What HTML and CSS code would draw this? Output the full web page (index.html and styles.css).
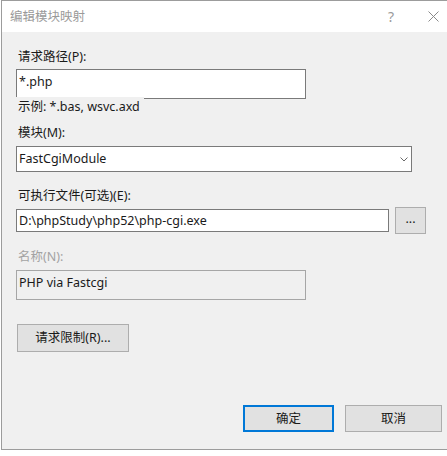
FILE: index.html
```html
<!DOCTYPE html>
<html lang="zh-CN">
<head>
  <meta charset="UTF-8" />
  <title>编辑模块映射</title>
  <link rel="stylesheet" href="styles.css">
</head>
<body>

  <div class="dialog">
    <!-- Title bar -->
    <div class="titlebar">
      <span class="title">编辑模块映射</span>
      <span class="help">?</span>
      <span class="close">
        <svg width="11" height="11" viewBox="0 0 11 11">
          <path d="M0.5 0.5 L10.5 10.5 M10.5 0.5 L0.5 10.5" stroke="#8a8a8a" stroke-width="1" fill="none"/>
        </svg>
      </span>
    </div>

    <!-- Form -->
    <div class="content">
      <div class="label first">请求路径(P):</div>
      <div class="textbox short path">*.php</div>
      <div class="hint">示例: *.bas, wsvc.axd</div>

      <div class="label module">模块(M):</div>
      <div class="combo">
        <span>FastCgiModule</span>
        <svg width="8" height="5" viewBox="0 0 8 5">
          <path d="M0.5 0.5 L4 4 L7.5 0.5" stroke="#6a6a6a" stroke-width="1" fill="none"/>
        </svg>
      </div>

      <div class="label exe">可执行文件(可选)(E):</div>
      <div class="exe-row">
        <div class="textbox exe-box">D:\phpStudy\php52\php-cgi.exe</div>
        <button class="btn btn-browse">...</button>
      </div>

      <div class="label disabled name">名称(N):</div>
      <div class="textbox short readonly">PHP via Fastcgi</div>

      <button class="btn btn-limits">请求限制(R)...</button>

      <div class="footer">
        <button class="btn btn-ok">确定</button>
        <button class="btn btn-cancel">取消</button>
      </div>
    </div>
  </div>

</body>
</html>
```

FILE: styles.css
```css
* { margin: 0; padding: 0; box-sizing: border-box; }
body {
  font-family: "Noto Sans", "Noto Sans CJK SC", sans-serif;
  font-size: 12.5px;
  line-height: 16px;
  color: #1a1a1a;
  background-color: #fff;
}

.dialog {
  margin-left: 1px;
  width: 446px;
  border: 1px solid #9c9c9c;
  border-right: none;
}

/* Title bar */
.titlebar {
  display: flex;
  align-items: center;
  height: 31px;
  background-color: #fff;
  color: #9a9a9a;
}
.titlebar .title { padding-left: 8px; flex-grow: 1; }
.titlebar .help { width: 14px; text-align: center; margin-right: 30px; font-size: 14px; }
.titlebar .close { display: flex; margin-right: 8px; }

/* Form */
.content {
  background-color: #f0f0f0;
  padding: 0 5px 17px 14px;
}

.label.first { padding-top: 17px; }
.label { padding-left: 2px; }
.label.module { margin-top: 10px; }
.label.exe { margin-top: 16px; }
.label.name { margin-top: 15px; }
.label.disabled { color: #a3a3a3; }

.textbox {
  background-color: #fff;
  border: 1px solid #7a7a7a;
  padding: 4px 2px 0;
}
.textbox.short { width: 290px; height: 30px; }
.textbox.path { margin-top: 4px; }
.textbox.readonly {
  margin-top: 5px;
  background-color: #f0f0f0;
  border-color: #a6a6a6;
}

.hint {
  width: fit-content;
  margin-top: -2px;
  padding: 2px 4px 0 2px;
  background-color: #f0f0f0;
}

.combo {
  display: flex;
  align-items: center;
  justify-content: space-between;
  width: 396px;
  height: 26px;
  margin-top: 5px;
  padding: 0 3px 0 2px;
  background-color: #fff;
  border: 1px solid #7a7a7a;
}

.exe-row {
  display: flex;
  align-items: center;
  gap: 6px;
  margin-top: 3px;
}
.exe-box {
  width: 373px;
  height: 23px;
  padding-top: 3px;
}

/* Buttons */
.btn {
  font-family: inherit;
  font-size: inherit;
  line-height: 16px;
  color: #1a1a1a;
  background-color: #e1e1e1;
  border: 1px solid #adadad;
  cursor: pointer;
}
.btn-browse { width: 31px; height: 27px; padding-bottom: 4px; }
.btn-limits {
  display: block;
  width: 112px;
  height: 28px;
  margin: 24px 0 0 1px;
}

.footer {
  display: flex;
  justify-content: flex-end;
  gap: 11px;
  margin-top: 53px;
}
.footer .btn { height: 27px; }
.btn-ok { width: 91px; border: 2px solid #0078d7; }
.btn-cancel { width: 97px; }
```
